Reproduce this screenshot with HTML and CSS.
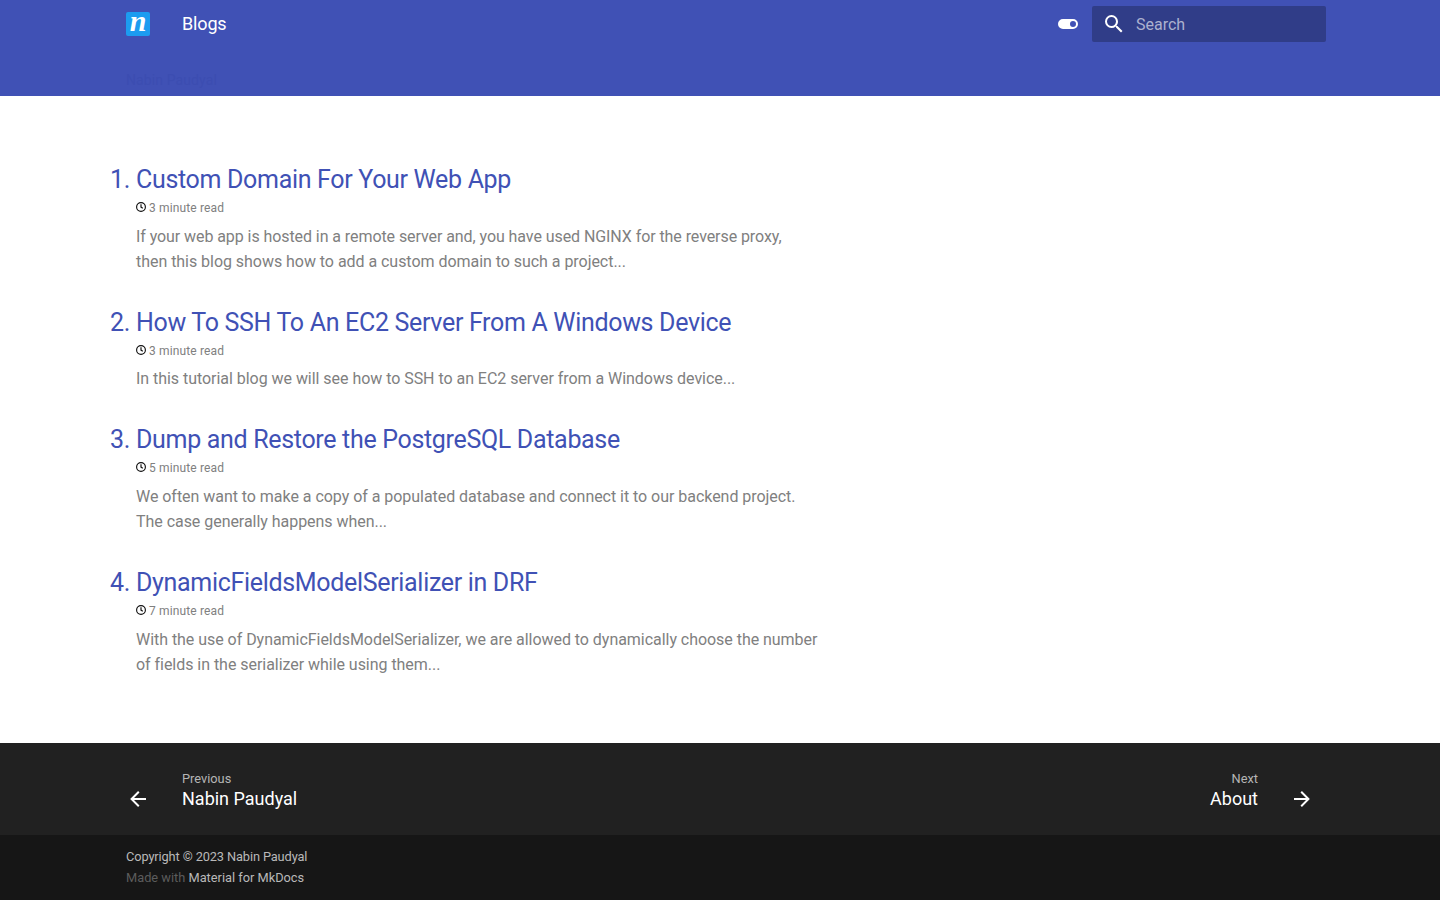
FILE: index.html
```html
<!DOCTYPE html>
<html lang="en">
<head>
<meta charset="utf-8">
<title>Blogs</title>
<link rel="stylesheet" href="styles.css">
</head>
<body>
<header class="header">
  <div class="grid header-row">
    <svg class="logo" viewBox="0 0 24 24"><rect width="24" height="24" rx="2" fill="#1c9cf0"/><text class="logo-text" transform="translate(12 19.3) scale(1 1)" text-anchor="middle">n</text></svg>
    <span class="header-title">Blogs</span>
    <svg class="icon toggle" viewBox="0 0 24 24"><path d="M17 7H7a5 5 0 0 0-5 5 5 5 0 0 0 5 5h10a5 5 0 0 0 5-5 5 5 0 0 0-5-5m0 8a3 3 0 0 1-3-3 3 3 0 0 1 3-3 3 3 0 0 1 3 3 3 3 0 0 1-3 3Z"/></svg>
    <div class="search">
      <svg class="icon" viewBox="0 0 24 24"><path d="M9.5 3A6.5 6.5 0 0 1 16 9.5c0 1.61-.59 3.09-1.56 4.23l.27.27h.79l5 5-1.5 1.5-5-5v-.79l-.27-.27A6.516 6.516 0 0 1 9.5 16 6.5 6.5 0 0 1 3 9.5 6.5 6.5 0 0 1 9.5 3m0 2C7 5 5 7 5 9.5S7 14 9.5 14 14 12 14 9.5 12 5 9.5 5Z"/></svg>
      <span class="search-label">Search</span>
    </div>
  </div>
  <nav class="grid tabs"><a class="tab">Nabin Paudyal</a></nav>
</header>
<main class="grid main">
  <ol class="posts">
    <li class="post">
      <h2 class="post-title">Custom Domain For Your Web App</h2>
      <p class="meta"><svg class="clock" viewBox="0 0 10 10"><circle cx="5" cy="5" r="4.4"/><path d="M5 2.3V5.1L6.8 6.2"/></svg>3 minute read</p>
      <p class="summary"><span class="tight">If your web app is hosted in a remote server and, you have used NGINX for the reverse proxy,</span><br>then this blog shows how to add a custom domain to such a project...</p>
    </li>
    <li class="post">
      <h2 class="post-title">How To SSH To An EC2 Server From A Windows Device</h2>
      <p class="meta"><svg class="clock" viewBox="0 0 10 10"><circle cx="5" cy="5" r="4.4"/><path d="M5 2.3V5.1L6.8 6.2"/></svg>3 minute read</p>
      <p class="summary">In this tutorial blog we will see how to SSH to an EC2 server from a Windows device...</p>
    </li>
    <li class="post">
      <h2 class="post-title">Dump and Restore the PostgreSQL Database</h2>
      <p class="meta"><svg class="clock" viewBox="0 0 10 10"><circle cx="5" cy="5" r="4.4"/><path d="M5 2.3V5.1L6.8 6.2"/></svg>5 minute read</p>
      <p class="summary">We often want to make a copy of a populated database and connect it to our backend project.<br>The case generally happens when...</p>
    </li>
    <li class="post">
      <h2 class="post-title">DynamicFieldsModelSerializer in DRF</h2>
      <p class="meta"><svg class="clock" viewBox="0 0 10 10"><circle cx="5" cy="5" r="4.4"/><path d="M5 2.3V5.1L6.8 6.2"/></svg>7 minute read</p>
      <p class="summary">With the use of DynamicFieldsModelSerializer, we are allowed to dynamically choose the number<br>of fields in the serializer while using them...</p>
    </li>
  </ol>
</main>
<footer class="footer">
  <nav class="grid footer-nav">
    <a class="footer-link">
      <svg class="icon" viewBox="0 0 24 24"><path d="M20 11v2H8l5.5 5.5-1.42 1.42L4.16 12l7.92-7.92L13.5 5.5 8 11h12Z"/></svg>
      <span class="footer-title"><small class="direction">Previous</small>Nabin Paudyal</span>
    </a>
    <a class="footer-link next">
      <span class="footer-title"><small class="direction">Next</small>About</span>
      <svg class="icon" viewBox="0 0 24 24"><path d="M4 11v2h12l-5.5 5.5 1.42 1.42L19.84 12l-7.92-7.92L10.5 5.5 16 11H4Z"/></svg>
    </a>
  </nav>
  <div class="footer-meta">
    <div class="grid copyright">
      <div class="highlight">Copyright © 2023 Nabin Paudyal</div>
      <div>Made with <a class="credit">Material for MkDocs</a></div>
    </div>
  </div>
</footer>
</body>
</html>
```
FILE: styles.css
```css
* { box-sizing: border-box; }
body {
  margin: 0;
  height: 900px;
  overflow: hidden;
  display: flex;
  flex-direction: column;
  font-family: Roboto, sans-serif;
  background: #fff;
}
.grid { width: 1220px; margin: 0 auto; }
.icon { width: 24px; height: 24px; fill: currentColor; flex: none; }
.header { height: 96px; background: #4051b5; color: #fff; }
.header-row { display: flex; align-items: center; height: 48px; padding: 0 4px 0 16px; }
.logo { width: 24px; height: 24px; overflow: visible; }
.logo-text { font: italic bold 30px "Liberation Serif", serif; fill: #fff; }
.header-title { margin-left: 32px; font-size: 18px; line-height: 48px; letter-spacing: -0.15px; }
.toggle { margin-left: auto; }
.search {
  display: flex;
  align-items: center;
  width: 234px;
  height: 36px;
  margin-left: 12px;
  padding-left: 10px;
  border-radius: 2px;
  background: #303d88;
}
.search-label { margin-left: 10px; font-size: 16px; color: #acb1cf; line-height: 36px; padding-top: 1px; }
.tabs { height: 48px; padding: 23px 16px 0; font-size: 14px; line-height: 18px; letter-spacing: 0.1px; }
.tab { color: #3c4db1; }
.main { height: 647px; flex: none; padding-top: 65px; }
.posts { margin: 0; padding: 0; list-style: none; counter-reset: post; }
.post { counter-increment: post; padding-left: 26px; margin-bottom: 29.3px; }
.post-title {
  display: flex;
  margin: 0;
  font-size: 25px;
  font-weight: 400;
  line-height: 38px;
  letter-spacing: -0.32px;
  color: #4051b5;
}
.post-title::before { content: counter(post) "."; width: 26px; margin-left: -26px; flex: none; letter-spacing: -0.25px; }
.meta { display: flex; align-items: center; gap: 3px; margin: -1px 0 0; font-size: 12px; line-height: 20px; letter-spacing: 0.14px; color: gray; }
.clock { width: 10px; height: 10px; margin-top: -2px; fill: none; stroke: #111; stroke-width: 1.15; }
.summary { margin: 5.5px 0 0; font-size: 16px; line-height: 25.6px; letter-spacing: -0.04px; color: gray; }
.tight { letter-spacing: -0.075px; }
.footer { flex: none; height: 157px; background: #212121; color: #fff; }
.footer-nav { display: flex; justify-content: space-between; height: 92px; padding: 0 16px; }
.footer-link { display: flex; align-items: flex-end; gap: 32px; padding-bottom: 24px; }
.next { text-align: right; }
.footer-title { display: flex; flex-direction: column; font-size: 18px; line-height: 24px; }
.direction { font-size: 12.8px; line-height: 16px; color: #b5b5b5; }
.footer-meta { height: 65px; background: #161616; }
.copyright { padding: 11px 16px 0; font-size: 12.8px; line-height: 21px; color: #5c5c5c; }
.highlight, .credit { color: #b9b9b9; }
.highlight { letter-spacing: -0.12px; }
```
